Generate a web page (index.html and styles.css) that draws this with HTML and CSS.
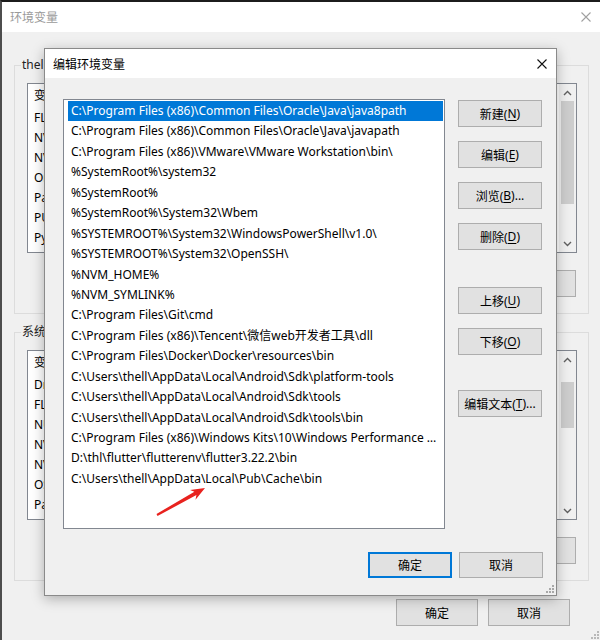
FILE: index.html
```html
<!DOCTYPE html>
<html lang="zh-CN">
<head>
  <meta charset="UTF-8">
  <title>环境变量</title>
  <link rel="stylesheet" href="styles.css">
</head>
<body>
  <div class="win">
    <div class="titlebar">
      <span class="title">环境变量</span>
      <svg class="close" width="10" height="10" viewBox="0 0 10 10"><path d="M0.5 0.5 L9.5 9.5 M9.5 0.5 L0.5 9.5" stroke="#a0a0a0" stroke-width="1.1" fill="none"/></svg>
    </div>

    <div class="win-body">
      <fieldset class="group">
        <legend>thell 的用户变量(<u>U</u>)</legend>
        <div class="listview">
          <div class="lv-rows">
            <div class="lv-head">变量</div>
            <div class="lv-row">FLUTTER_STORAGE_BASE_URL</div>
            <div class="lv-row">NVM_HOME</div>
            <div class="lv-row">NVM_SYMLINK</div>
            <div class="lv-row">OneDrive</div>
            <div class="lv-row">Path</div>
            <div class="lv-row">PUB_HOSTED_URL</div>
            <div class="lv-row">PyCharm Community Edition</div>
          </div>
          <div class="vscroll">
            <div class="sb-btn"><svg width="9" height="6" viewBox="0 0 9 6"><polyline points="1,5 4.5,1.5 8,5" stroke="#606060" stroke-width="1.4" fill="none"/></svg></div>
            <div class="sb-track"><div class="sb-thumb thumb-user"></div></div>
            <div class="sb-btn"><svg width="9" height="6" viewBox="0 0 9 6"><polyline points="1,1 4.5,4.5 8,1" stroke="#606060" stroke-width="1.4" fill="none"/></svg></div>
          </div>
        </div>
        <div class="group-btns">
          <button class="btn">新建(<u>N</u>)...</button>
          <button class="btn">编辑(<u>E</u>)...</button>
          <button class="btn">删除(<u>D</u>)</button>
        </div>
      </fieldset>

      <fieldset class="group">
        <legend>系统变量(<u>S</u>)</legend>
        <div class="listview">
          <div class="lv-rows">
            <div class="lv-head">变量</div>
            <div class="lv-row">DriverData</div>
            <div class="lv-row">FLUTTER_STORAGE_BASE_URL</div>
            <div class="lv-row">NUMBER_OF_PROCESSORS</div>
            <div class="lv-row">NVM_HOME</div>
            <div class="lv-row">NVM_SYMLINK</div>
            <div class="lv-row">OS</div>
            <div class="lv-row">Path</div>
          </div>
          <div class="vscroll">
            <div class="sb-btn"><svg width="9" height="6" viewBox="0 0 9 6"><polyline points="1,5 4.5,1.5 8,5" stroke="#606060" stroke-width="1.4" fill="none"/></svg></div>
            <div class="sb-track"><div class="sb-thumb thumb-sys"></div></div>
            <div class="sb-btn"><svg width="9" height="6" viewBox="0 0 9 6"><polyline points="1,1 4.5,4.5 8,1" stroke="#606060" stroke-width="1.4" fill="none"/></svg></div>
          </div>
        </div>
        <div class="group-btns">
          <button class="btn">新建(<u>W</u>)...</button>
          <button class="btn">编辑(<u>I</u>)...</button>
          <button class="btn">删除(<u>L</u>)</button>
        </div>
      </fieldset>

      <div class="win-foot">
        <button class="btn">确定</button>
        <button class="btn">取消</button>
      </div>
    </div>

    <svg class="grip win-grip" width="10" height="10" viewBox="0 0 10 10" fill="#b8b8b8"><rect x="8" y="2" width="2" height="2"/><rect x="8" y="5" width="2" height="2"/><rect x="5" y="5" width="2" height="2"/><rect x="8" y="8" width="2" height="2"/><rect x="5" y="8" width="2" height="2"/><rect x="2" y="8" width="2" height="2"/></svg>

    <div class="dialog">
      <div class="dlg-title">
        <span>编辑环境变量</span>
        <svg class="close" width="10" height="10" viewBox="0 0 10 10"><path d="M0.5 0.5 L9.5 9.5 M9.5 0.5 L0.5 9.5" stroke="#111" stroke-width="1.1" fill="none"/></svg>
      </div>
      <div class="dlg-body">
        <div class="dlg-main">
          <div class="path-list">
            <div class="path-item selected">C:\Program Files (x86)\Common Files\Oracle\Java\java8path</div>
            <div class="path-item">C:\Program Files (x86)\Common Files\Oracle\Java\javapath</div>
            <div class="path-item">C:\Program Files (x86)\VMware\VMware Workstation\bin\</div>
            <div class="path-item">%SystemRoot%\system32</div>
            <div class="path-item">%SystemRoot%</div>
            <div class="path-item">%SystemRoot%\System32\Wbem</div>
            <div class="path-item">%SYSTEMROOT%\System32\WindowsPowerShell\v1.0\</div>
            <div class="path-item">%SYSTEMROOT%\System32\OpenSSH\</div>
            <div class="path-item">%NVM_HOME%</div>
            <div class="path-item">%NVM_SYMLINK%</div>
            <div class="path-item">C:\Program Files\Git\cmd</div>
            <div class="path-item">C:\Program Files (x86)\Tencent\微信web开发者工具\dll</div>
            <div class="path-item">C:\Program Files\Docker\Docker\resources\bin</div>
            <div class="path-item">C:\Users\thell\AppData\Local\Android\Sdk\platform-tools</div>
            <div class="path-item">C:\Users\thell\AppData\Local\Android\Sdk\tools</div>
            <div class="path-item">C:\Users\thell\AppData\Local\Android\Sdk\tools\bin</div>
            <div class="path-item">C:\Program Files (x86)\Windows Kits\10\Windows Performance Toolkit\</div>
            <div class="path-item">D:\thl\flutter\flutterenv\flutter3.22.2\bin</div>
            <div class="path-item">C:\Users\thell\AppData\Local\Pub\Cache\bin</div>
          </div>
          <div class="dlg-btns">
            <button class="btn">新建(<u>N</u>)</button>
            <button class="btn">编辑(<u>E</u>)</button>
            <button class="btn">浏览(<u>B</u>)...</button>
            <button class="btn">删除(<u>D</u>)</button>
            <button class="btn btn-gap">上移(<u>U</u>)</button>
            <button class="btn">下移(<u>O</u>)</button>
            <button class="btn btn-gap2">编辑文本(<u>T</u>)...</button>
          </div>
        </div>
        <div class="dlg-foot">
          <button class="btn btn-default">确定</button>
          <button class="btn">取消</button>
        </div>
      </div>
      <svg class="grip dlg-grip" width="10" height="10" viewBox="0 0 10 10" fill="#a8a8a8"><rect x="8" y="2" width="2" height="2"/><rect x="8" y="5" width="2" height="2"/><rect x="5" y="5" width="2" height="2"/><rect x="8" y="8" width="2" height="2"/><rect x="5" y="8" width="2" height="2"/><rect x="2" y="8" width="2" height="2"/></svg>
    </div>

    <svg class="arrow" width="62" height="40" viewBox="150 482 62 40">
      <polygon points="156.5,514 194.4,491.7 190.1,490.1 205,488 195.5,499.7 196.4,495.1 157.5,516" fill="#e8221e"/>
    </svg>
  </div>
</body>
</html>
```

FILE: styles.css
```css
* {
  box-sizing: border-box;
}
body {
  margin: 0;
  font-family: "Noto Sans", "Noto Sans CJK SC", sans-serif;
  font-size: 12px;
  color: #000;
  background: #f0f0f0;
}
u {
  text-underline-offset: 2px;
}

/* back window */
.win {
  position: relative;
  width: 600px;
  height: 640px;
  background: #f0f0f0;
  border-top: 2px solid #1c1c1c;
  border-left: 2px solid #4d4d4d;
  overflow: hidden;
}
.titlebar {
  height: 30px;
  background: #fff;
  display: flex;
  align-items: center;
  justify-content: space-between;
  padding: 0 9px 0 8px;
}
.titlebar .title {
  color: #9a9a9a;
}
.close {
  display: block;
}
.win-body {
  padding: 25px 11px 0 12px;
}
.group {
  margin: 0;
  min-width: 0;
  border: 1px solid #dcdcdc;
  padding: 10px 11px 16px 12px;
}
.group + .group {
  margin-top: 10px;
}
.group legend {
  margin-left: -6px;
  padding: 0 1px;
  line-height: 16px;
  color: #222;
}
.listview {
  display: flex;
  height: 170px;
  border: 1px solid #828790;
  background: #fff;
}
.lv-rows {
  flex: 1;
  overflow: hidden;
}
.lv-head {
  height: 24px;
  line-height: 24px;
  padding-left: 6px;
}
.lv-row {
  height: 20px;
  line-height: 20px;
  padding-left: 6px;
  white-space: nowrap;
}
.vscroll {
  width: 17px;
  background: #f0f0f0;
  display: flex;
  flex-direction: column;
}
.sb-btn {
  height: 17px;
  display: flex;
  align-items: center;
  justify-content: center;
}
.sb-track {
  flex: 1;
}
.sb-thumb {
  background: #cdcdcd;
  margin: 0 2px;
}
.thumb-user {
  height: 103px;
}
.thumb-sys {
  margin-top: 14px;
  height: 46px;
}
.group-btns {
  display: flex;
  justify-content: flex-end;
  gap: 10px;
  margin-top: 17px;
  padding-right: 1px;
}
.btn {
  width: 82px;
  height: 27px;
  padding: 0;
  font: inherit;
  color: #000;
  background: #e1e1e1;
  border: 1px solid #adadad;
  display: flex;
  align-items: center;
  justify-content: center;
  white-space: nowrap;
}
.win-foot {
  display: flex;
  justify-content: flex-end;
  gap: 10px;
  margin-top: 18px;
  padding-right: 19px;
}
.grip {
  position: absolute;
  right: 1px;
  bottom: 1px;
}

/* edit dialog */
.dialog {
  position: absolute;
  left: 42px;
  top: 46px;
  width: 513px;
  height: 548px;
  background: #f0f0f0;
  border: 1px solid #8a8a8a;
  box-shadow: 0 3px 12px rgba(0, 0, 0, 0.28);
}
.dlg-title {
  height: 29px;
  background: #fff;
  display: flex;
  align-items: center;
  justify-content: space-between;
  padding: 0 9px 0 8px;
}
.dlg-body {
  padding: 21px 13px 0 18px;
}
.dlg-main {
  display: flex;
  gap: 13px;
}
.path-list {
  width: 382px;
  height: 430px;
  background: #fff;
  border: 1px solid #828790;
  padding: 1px 1px 0 4px;
  overflow: hidden;
}
.path-item {
  height: 20.44px;
  line-height: 20.44px;
  padding: 0 4px 0 3px;
  white-space: nowrap;
  overflow: hidden;
  text-overflow: ellipsis;
}
.path-item.selected {
  background: #0078d7;
  color: #fff;
}
.dlg-btns {
  width: 84px;
  display: flex;
  flex-direction: column;
  gap: 14px;
  padding-top: 1px;
}
.dlg-btns .btn {
  width: 84px;
}
.dlg-btns .btn-gap {
  margin-top: 23px;
}
.dlg-btns .btn-gap2 {
  margin-top: 21px;
}
.dlg-foot {
  display: flex;
  justify-content: flex-end;
  gap: 7px;
  margin-top: 23px;
}
.dlg-foot .btn {
  width: 84px;
  height: 26px;
}
.btn-default {
  border: 2px solid #0078d7;
}
.dlg-grip {
  right: 2px;
  bottom: 2px;
}
.arrow {
  position: absolute;
  left: 148px;
  top: 480px;
}
```
